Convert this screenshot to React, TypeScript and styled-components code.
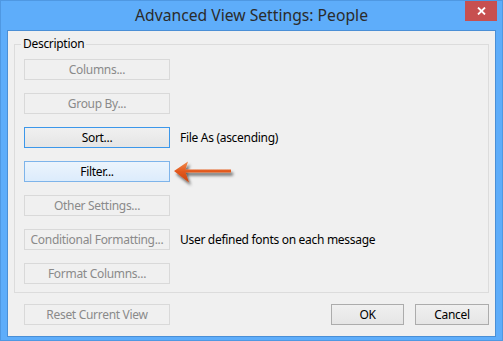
import styled, { createGlobalStyle } from 'styled-components'

const GlobalStyle = createGlobalStyle`
  html, body {
    margin: 0;
    padding: 0;
    background: #ffffff;
  }
  body {
    font-family: 'Noto Sans', 'Open Sans', sans-serif;
  }
`

const Frame = styled.div`
  position: relative;
  width: 503px;
  height: 341px;
  box-sizing: border-box;
  border: 1px solid #4f98e2;
  background: #5eadfa;
  display: flex;
  flex-direction: column;
`

const TitleBar = styled.div`
  height: 29px;
  display: grid;
  grid-template-columns: 1fr auto 1fr;
  align-items: start;
`

const Title = styled.div`
  grid-column: 2;
  font-size: 15.7px;
  line-height: 29px;
  color: #2b2b2b;
`

const CloseButton = styled.div`
  grid-column: 3;
  justify-self: end;
  width: 32px;
  height: 20px;
  margin-right: 5px;
  background: #c75050;
  display: flex;
  align-items: center;
  justify-content: center;
`

const Client = styled.div`
  flex: 1;
  margin: 0 6px 3px 6px;
  box-sizing: border-box;
  border: 1px solid #4a8fd6;
  background: #f0f0f0;
  padding: 5px 6px 11px 6px;
  display: flex;
  flex-direction: column;
`

const GroupBox = styled.fieldset`
  margin: 0;
  border: 1px solid #dcdcdc;
  padding: 7px 9px 8px 9px;
  display: flex;
  flex-direction: column;
  gap: 13px;
`

const Legend = styled.legend`
  font-size: 12px;
  line-height: 16px;
  color: #000;
  padding: 0 2px;
  margin-left: -3px;
  letter-spacing: -0.3px;
`

const Row = styled.div`
  display: flex;
  align-items: center;
  gap: 10px;
`

type Variant = 'disabled' | 'normal' | 'focused' | 'hover'

const Button = styled.div<{ $variant: Variant; $width?: number }>`
  width: ${(p) => p.$width ?? 146}px;
  height: 21px;
  box-sizing: border-box;
  display: flex;
  align-items: center;
  justify-content: center;
  font-size: 12px;
  letter-spacing: -0.3px;
  border: 1px solid
    ${(p) =>
      p.$variant === 'disabled'
        ? '#d9d9d9'
        : p.$variant === 'focused'
          ? '#3c97ea'
          : p.$variant === 'hover'
            ? '#7eb4ea'
            : '#acacac'};
  background: ${(p) =>
    p.$variant === 'disabled'
      ? '#f0f0f0'
      : p.$variant === 'hover'
        ? 'linear-gradient(#ecf4fc, #dcecfc)'
        : 'linear-gradient(#f0f0f0, #e5e5e5)'};
  color: ${(p) => (p.$variant === 'disabled' ? '#8a8a8a' : '#000')};
`

const Label = styled.span`
  font-size: 12px;
  color: #000;
  letter-spacing: -0.3px;
`

const Footer = styled.div`
  margin-top: 11px;
  padding: 0 0 0 10px;
  display: flex;
  align-items: center;
`

const Spacer = styled.div`
  flex: 1;
`

const ButtonPair = styled.div`
  display: flex;
  gap: 11px;
`

const Arrow = styled.svg`
  position: absolute;
  left: 165px;
  top: 155px;
`

const rows: { text: string; variant: Variant; label?: string }[] = [
  { text: 'Columns...', variant: 'disabled' },
  { text: 'Group By...', variant: 'disabled' },
  { text: 'Sort...', variant: 'focused', label: 'File As (ascending)' },
  { text: 'Filter...', variant: 'hover' },
  { text: 'Other Settings...', variant: 'disabled' },
  { text: 'Conditional Formatting...', variant: 'disabled', label: 'User defined fonts on each message' },
  { text: 'Format Columns...', variant: 'disabled' },
]

export default function App() {
  return (
    <>
      <GlobalStyle />
      <Frame>
        <TitleBar>
          <Title>Advanced View Settings: People</Title>
          <CloseButton>
            <svg width="9" height="8" viewBox="0 0 9 8">
              <path d="M1 0.5 L8 7.5 M8 0.5 L1 7.5" stroke="#fff" strokeWidth="1.8" />
            </svg>
          </CloseButton>
        </TitleBar>
        <Client>
          <GroupBox>
            <Legend>Description</Legend>
            {rows.map((r) => (
              <Row key={r.text}>
                <Button $variant={r.variant}>{r.text}</Button>
                {r.label && <Label>{r.label}</Label>}
              </Row>
            ))}
          </GroupBox>
          <Footer>
            <Button $variant="disabled">Reset Current View</Button>
            <Spacer />
            <ButtonPair>
              <Button $variant="normal" $width={73}>OK</Button>
              <Button $variant="normal" $width={74}>Cancel</Button>
            </ButtonPair>
          </Footer>
        </Client>
        <Arrow width="80" height="35" viewBox="0 0 80 35">
          <defs>
            <linearGradient id="arrowFill" x1="0" y1="0" x2="0" y2="1">
              <stop offset="0" stopColor="#f08a4a" />
              <stop offset="0.5" stopColor="#e2561c" />
              <stop offset="1" stopColor="#c9460f" />
            </linearGradient>
            <filter id="arrowShadow" x="-20%" y="-30%" width="150%" height="190%">
              <feDropShadow dx="2" dy="3" stdDeviation="1.6" floodColor="#000" floodOpacity="0.6" />
            </filter>
          </defs>
          <g filter="url(#arrowShadow)">
            <path
              d="M8 15 L22 5.5 L19.5 13.5 L65 13.5 L65 16.5 L19.5 16.5 L23 26.5 Z"
              fill="url(#arrowFill)"
            />
          </g>
        </Arrow>
      </Frame>
    </>
  )
}
